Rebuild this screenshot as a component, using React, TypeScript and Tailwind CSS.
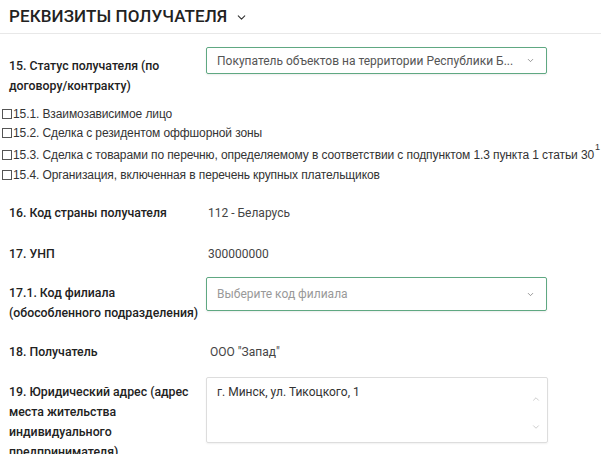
import { ChevronDown, ChevronUp } from 'lucide-react';

const checks = [
  '15.1. Взаимозависимое лицо',
  '15.2. Сделка с резидентом оффшорной зоны',
  '15.3. Сделка с товарами по перечню, определяемому в соответствии с подпунктом 1.3 пункта 1 статьи 30',
  '15.4. Организация, включенная в перечень крупных плательщиков',
];

function Box() {
  return <span className="inline-block w-[10px] h-[10px] border border-[#555] mr-[1px] shrink-0" />;
}

function Label({ children, className = '' }: { children: React.ReactNode; className?: string }) {
  return (
    <div className={`w-[206px] pl-[9px] shrink-0 text-[12.3px] leading-[20px] font-medium text-[#222] whitespace-nowrap ${className}`}>
      {children}
    </div>
  );
}

export default function App() {
  return (
    <div className="w-[601px] h-[454px] overflow-hidden bg-white" style={{ fontFamily: 'Roboto, "Liberation Sans", sans-serif' }}>
      {/* Header */}
      <div className="h-[34px] border-b border-[#e8e8e8] pl-[9px] flex items-center gap-[8px]">
        <span className="text-[17px] font-medium text-[#222] tracking-[0.1px]">РЕКВИЗИТЫ ПОЛУЧАТЕЛЯ</span>
        <ChevronDown className="w-[13px] h-[13px] text-[#333] mt-[1px]" strokeWidth={2} />
      </div>

      {/* 15 */}
      <div className="flex mt-[13px]">
        <Label className="pt-[9px]">
          15. Статус получателя (по
          <br />
          договору/контракту)
        </Label>
        <div className="w-[341px] h-[27px] border border-[#5fa882] rounded-[2px] flex items-center justify-between pl-[10px] pr-[11px] shadow-[0_1px_2px_rgba(0,0,0,0.08)]">
          <span className="text-[12px] text-[#555] whitespace-nowrap">Покупатель объектов на территории Республики Б...</span>
          <ChevronDown className="w-[9px] h-[9px] text-[#777] shrink-0" strokeWidth={2} />
        </div>
      </div>

      {/* checkboxes */}
      <div className="mt-[8px] text-[12px] text-[#333]" style={{ fontFamily: '"Liberation Sans", Arial, sans-serif' }}>
        {checks.map((c, i) => (
          <div key={i} className={`flex items-center pl-[2px] whitespace-nowrap ${i === 2 ? 'h-[23px] pt-[3px]' : 'h-[19px]'}`}>
            <Box />
            <span className="tracking-[-0.1px]">{c}</span>
            {i === 2 && <sup className="text-[9px] -translate-y-[4px] ml-[1px]">1</sup>}
          </div>
        ))}
      </div>

      {/* 16 */}
      <div className="flex mt-[19px] h-[20px] items-center">
        <Label>16. Код страны получателя</Label>
        <span className="pl-[2px] text-[12px] text-[#444]">112 - Беларусь</span>
      </div>

      {/* 17 */}
      <div className="flex mt-[21px] h-[20px] items-center">
        <Label>17. УНП</Label>
        <span className="pl-[2px] text-[12px] text-[#444]">300000000</span>
      </div>

      {/* 17.1 */}
      <div className="flex mt-[13px]">
        <Label className="pt-[6px]">
          17.1. Код филиала
          <br />
          (обособленного подразделения)
        </Label>
        <div className="w-[341px] h-[34px] border border-[#5fa882] rounded-[2px] flex items-center justify-between pl-[10px] pr-[11px] shadow-[0_1px_2px_rgba(0,0,0,0.08)]">
          <span className="text-[12px] text-[#999]">Выберите код филиала</span>
          <ChevronDown className="w-[9px] h-[9px] text-[#777] shrink-0" strokeWidth={2} />
        </div>
      </div>

      {/* 18 */}
      <div className="flex mt-[19px] h-[20px] items-center">
        <Label>18. Получатель</Label>
        <span className="pl-[4px] text-[12px] text-[#444]">ООО "Запад"</span>
      </div>

      {/* 19 */}
      <div className="flex mt-[15px]">
        <Label className="pt-[5px]">
          19. Юридический адрес (адрес
          <br />
          места жительства
          <br />
          индивидуального
          <br />
          предпринимателя)
        </Label>
        <div className="w-[342px] h-[66px] border border-[#ddd] rounded-[2px] flex justify-between pl-[10px] pr-[6px] pt-[4px] shadow-[0_1px_2px_rgba(0,0,0,0.06)]">
          <span className="text-[12px] text-[#333] leading-[20px]">г. Минск, ул. Тикоцкого, 1</span>
          <div className="flex flex-col justify-between items-center pt-[12px] pb-[10px]">
            <ChevronUp className="w-[10px] h-[10px] text-[#c4c4c4]" strokeWidth={2} />
            <ChevronDown className="w-[10px] h-[10px] text-[#c4c4c4]" strokeWidth={2} />
          </div>
        </div>
      </div>
    </div>
  );
}
